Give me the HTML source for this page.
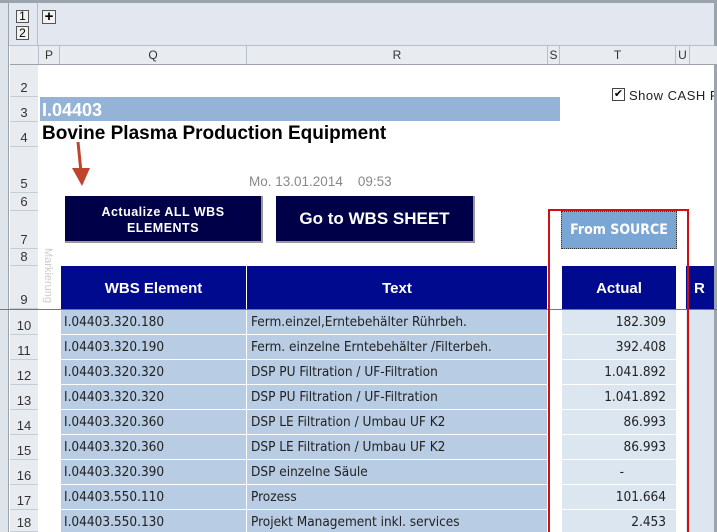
<!DOCTYPE html>
<html style="width:717px;height:532px;overflow:hidden"><head><meta charset="utf-8"><style>
*{margin:0;padding:0;box-sizing:border-box}
body{width:717px;height:532px;overflow:hidden;background:#fff;position:relative;font-family:"Liberation Sans",Arial,sans-serif}
.a{position:absolute}
.rh{position:absolute;left:10px;width:28px;background:#e8ebf0;border-bottom:1px solid #c6ccd6;font-size:13px;color:#333;text-align:center;display:flex;align-items:flex-end;justify-content:center;padding-bottom:1px}
.ch{position:absolute;top:46px;height:18px;border-right:1px solid #b8bfc9;font-size:12px;color:#333;text-align:center;line-height:18px}
.row{position:absolute;height:24px;line-height:24px;font-size:13.5px;color:#222;white-space:nowrap;font-family:"DejaVu Sans Condensed","Liberation Sans Narrow","Liberation Sans",sans-serif}
.hd{position:absolute;top:266px;height:43px;background:#000a8f;color:#fff;font-weight:bold;font-size:15px;text-align:center;line-height:46px}
</style></head><body>
<div class="a" style="left:0;top:0;width:717px;height:3px;background:#9ba3ad"></div>
<div class="a" style="left:0;top:3px;width:717px;height:43px;background:#e3e7f0;border-bottom:1px solid #b8bfc9"></div>
<div class="a" style="left:0;top:3px;width:9px;height:529px;background:#dfe3ea;border-right:1px solid #9ba3ad"></div>
<div class="a" style="left:9px;top:3px;width:29px;height:43px;border-right:1px solid #b8bfc9"></div>
<div class="a" style="left:16px;top:10px;width:13px;height:13px;border:1px solid #555;font-size:12px;line-height:11px;text-align:center;background:#f2f2f2">1</div>
<div class="a" style="left:16px;top:26px;width:13px;height:14px;border:1px solid #555;font-size:12px;line-height:12px;text-align:center;background:#f2f2f2">2</div>
<div class="a" style="left:42px;top:10px;width:14px;height:14px;border:1px solid #555;font-size:15px;font-weight:bold;line-height:11px;text-align:center;background:#f2f2f2">+</div>
<div class="a" style="left:714px;top:3px;width:3px;height:529px;background:#9ba3ad"></div>
<div class="a" style="left:10px;top:46px;width:707px;height:19px;background:#e8ebf0;border-bottom:1px solid #9ba3ad"></div>
<div class="ch" style="left:10px;width:29px"></div>
<div class="ch" style="left:39px;width:21px">P</div>
<div class="ch" style="left:60px;width:187px">Q</div>
<div class="ch" style="left:247px;width:301px">R</div>
<div class="ch" style="left:548px;width:12px">S</div>
<div class="ch" style="left:560px;width:116px">T</div>
<div class="ch" style="left:676px;width:14px">U</div>
<div class="a" style="left:10px;top:65px;width:28px;height:467px;background:#e8ebf0;border-right:1px solid #b8bfc9"></div>
<div class="rh" style="top:65px;height:32px">2</div>
<div class="rh" style="top:97px;height:25px">3</div>
<div class="rh" style="top:122px;height:25px">4</div>
<div class="rh" style="top:147px;height:46px">5</div>
<div class="rh" style="top:193px;height:18px">6</div>
<div class="rh" style="top:211px;height:38px">7</div>
<div class="rh" style="top:249px;height:17px">8</div>
<div class="rh" style="top:266px;height:43px">9</div>
<div class="a" style="left:0;top:309px;width:717px;height:1px;background:#777"></div>
<div class="rh" style="top:310px;height:25px">10</div>
<div class="rh" style="top:335px;height:25px">11</div>
<div class="rh" style="top:360px;height:25px">12</div>
<div class="rh" style="top:385px;height:25px">13</div>
<div class="rh" style="top:410px;height:25px">14</div>
<div class="rh" style="top:435px;height:25px">15</div>
<div class="rh" style="top:460px;height:25px">16</div>
<div class="rh" style="top:485px;height:25px">17</div>
<div class="rh" style="top:510px;height:22px">18</div>
<div class="a" style="left:40px;top:97px;width:520px;height:24px;background:#95b3d7;color:#fff;font-weight:bold;font-size:18px;line-height:26px;padding-left:2px">I.04403</div>
<div class="a" style="left:42px;top:122px;font-weight:bold;font-size:19px;line-height:24px;color:#000;white-space:nowrap">Bovine Plasma Production Equipment</div>
<div class="a" style="left:612px;top:88px;width:13px;height:13px;border:1px solid #444;background:#fff;font-size:11px;line-height:11px;text-align:center">✔</div>
<div class="a" style="left:629px;top:88px;width:85px;overflow:hidden;white-space:nowrap;font-size:13px;color:#222;letter-spacing:0.5px">Show CASH F</div>
<div class="a" style="left:249px;top:174px;font-size:13.5px;color:#888;white-space:nowrap">Mo. 13.01.2014&nbsp;&nbsp;&nbsp; 09:53</div>
<svg class="a" style="left:68px;top:142px" width="24" height="46"><line x1="10" y1="0" x2="13" y2="30" stroke="#c0442c" stroke-width="3"/><polygon points="4,26 22,26 14,44" fill="#c0442c"/></svg>
<div class="a" style="left:65px;top:196px;width:198px;height:47px;background:#000048;border-right:2px solid #999;border-bottom:2px solid #999;color:#fff;font-weight:bold;font-size:12.5px;text-align:center;line-height:16px;padding-top:8px;letter-spacing:0.5px">Actualize ALL WBS<br>ELEMENTS</div>
<div class="a" style="left:276px;top:196px;width:199px;height:47px;background:#000048;border-right:2px solid #999;border-bottom:2px solid #999;color:#fff;font-weight:bold;font-size:17px;text-align:center;line-height:45px">Go to WBS SHEET</div>
<div class="a" style="left:40px;top:248px;width:14px;font-size:11px;color:#ccc;writing-mode:vertical-rl">Markierung</div>
<div class="a" style="left:561px;top:211px;width:116px;height:38px;background:#7aa6d6;border:1px dotted #333;color:#fff;font-weight:bold;font-size:14px;text-align:center;line-height:36px;font-family:'DejaVu Sans Condensed','Liberation Sans',sans-serif">From SOURCE</div>
<div class="hd" style="left:61px;width:185px">WBS Element</div>
<div class="hd" style="left:247px;width:300px">Text</div>
<div class="hd" style="left:562px;width:114px">Actual</div>
<div class="hd" style="left:686px;width:28px;text-align:left;padding-left:8px">R</div>
<div class="row" style="top:310px;left:61px;width:185px;background:#b8cce4;padding-left:3px">I.04403.320.180</div>
<div class="row" style="top:310px;left:247px;width:300px;background:#b8cce4;padding-left:4px">Ferm.einzel,Erntebehälter Rührbeh.</div>
<div class="row" style="top:310px;left:562px;width:114px;background:#dce6f1;text-align:right;padding-right:10px">182.309</div>
<div class="row" style="top:335px;left:61px;width:185px;background:#b8cce4;padding-left:3px">I.04403.320.190</div>
<div class="row" style="top:335px;left:247px;width:300px;background:#b8cce4;padding-left:4px">Ferm. einzelne Erntebehälter /Filterbeh.</div>
<div class="row" style="top:335px;left:562px;width:114px;background:#dce6f1;text-align:right;padding-right:10px">392.408</div>
<div class="row" style="top:360px;left:61px;width:185px;background:#b8cce4;padding-left:3px">I.04403.320.320</div>
<div class="row" style="top:360px;left:247px;width:300px;background:#b8cce4;padding-left:4px">DSP PU Filtration / UF-Filtration</div>
<div class="row" style="top:360px;left:562px;width:114px;background:#dce6f1;text-align:right;padding-right:10px">1.041.892</div>
<div class="row" style="top:385px;left:61px;width:185px;background:#b8cce4;padding-left:3px">I.04403.320.320</div>
<div class="row" style="top:385px;left:247px;width:300px;background:#b8cce4;padding-left:4px">DSP PU Filtration / UF-Filtration</div>
<div class="row" style="top:385px;left:562px;width:114px;background:#dce6f1;text-align:right;padding-right:10px">1.041.892</div>
<div class="row" style="top:410px;left:61px;width:185px;background:#b8cce4;padding-left:3px">I.04403.320.360</div>
<div class="row" style="top:410px;left:247px;width:300px;background:#b8cce4;padding-left:4px">DSP LE Filtration / Umbau UF K2</div>
<div class="row" style="top:410px;left:562px;width:114px;background:#dce6f1;text-align:right;padding-right:10px">86.993</div>
<div class="row" style="top:435px;left:61px;width:185px;background:#b8cce4;padding-left:3px">I.04403.320.360</div>
<div class="row" style="top:435px;left:247px;width:300px;background:#b8cce4;padding-left:4px">DSP LE Filtration / Umbau UF K2</div>
<div class="row" style="top:435px;left:562px;width:114px;background:#dce6f1;text-align:right;padding-right:10px">86.993</div>
<div class="row" style="top:460px;left:61px;width:185px;background:#b8cce4;padding-left:3px">I.04403.320.390</div>
<div class="row" style="top:460px;left:247px;width:300px;background:#b8cce4;padding-left:4px">DSP einzelne Säule</div>
<div class="row" style="top:460px;left:562px;width:114px;background:#dce6f1;text-align:right;padding-right:52px">-</div>
<div class="row" style="top:485px;left:61px;width:185px;background:#b8cce4;padding-left:3px">I.04403.550.110</div>
<div class="row" style="top:485px;left:247px;width:300px;background:#b8cce4;padding-left:4px">Prozess</div>
<div class="row" style="top:485px;left:562px;width:114px;background:#dce6f1;text-align:right;padding-right:10px">101.664</div>
<div class="row" style="top:510px;left:61px;width:185px;height:22px;background:#b8cce4;padding-left:3px">I.04403.550.130</div>
<div class="row" style="top:510px;left:247px;width:300px;height:22px;background:#b8cce4;padding-left:4px">Projekt Management inkl. services</div>
<div class="row" style="top:510px;left:562px;width:114px;height:22px;background:#dce6f1;text-align:right;padding-right:10px">2.453</div>
<div class="a" style="left:686px;top:310px;width:28px;height:222px;background:#dce6f1"></div>
<div class="a" style="left:548px;top:209px;width:141px;height:323px;border:2px solid #d01010;border-bottom:none"></div>
</body></html>
